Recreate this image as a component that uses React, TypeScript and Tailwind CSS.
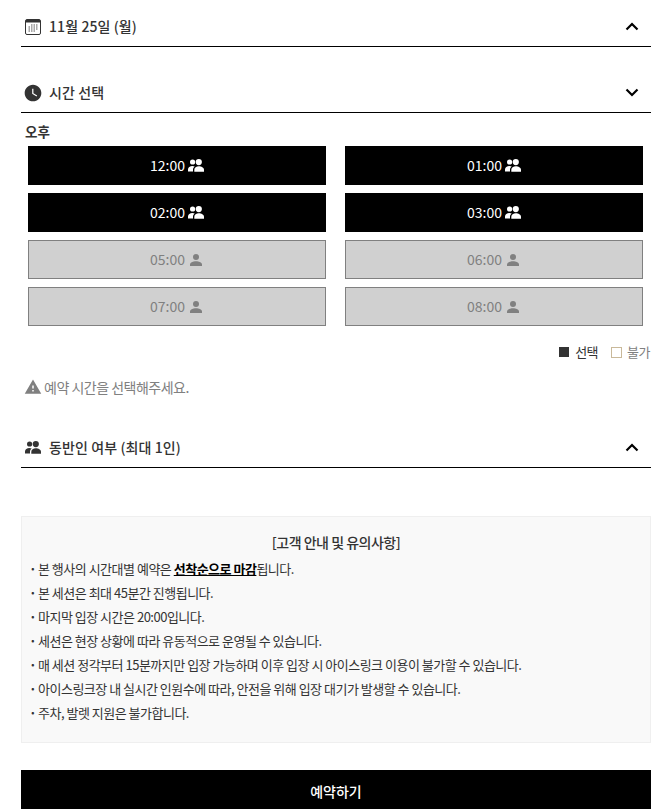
import React from 'react';
import { MdWarning, MdWatchLater } from 'react-icons/md';

const CalendarIcon = () => (
  <svg width="16" height="16" viewBox="0 0 16 16" fill="none" className="shrink-0">
    <rect x="0.5" y="0.5" width="15" height="15" rx="1.5" stroke="#333" />
    <rect x="1" y="1" width="14" height="2.5" fill="#333" />
    <path d="M6 6h1.5M8.500 6H10M11 6h1.500M3.500 8H5M6 8h1.500M8.500 8H10M11 8h1.500M3.500 10H5M6 10h1.500M8.500 10H10M11 10h1.500M3.500 12H5M6 12h1.500M8.500 12H10" stroke="#555" />
  </svg>
);

const PeopleIcon = ({ className }: { className?: string }) => (
  <svg width="16" height="13" viewBox="0 0 16 13" fill="currentColor" className={className}>
    <circle cx="4.6" cy="3" r="2.6" />
    <circle cx="10.8" cy="3.1" r="3.1" />
    <path d="M0 12.5V10.5C0 8.3 2 7 4.4 7c.9 0 1.7.2 2.3.5C5.600 8.300 5 9.400 5 10.700v1.800z" />
    <path d="M6.300 12.800V10.800C6.300 8.600 8.300 7.300 10.800 7.300s5.200 1.300 5.200 3.500v2z" />
  </svg>
);

const PersonIcon = () => (
  <svg width="12" height="12" viewBox="0 0 12 12" fill="currentColor">
    <circle cx="6" cy="3" r="3" />
    <path d="M0 12v-1.500C0 8.600 3 7.300 6 7.300s6 1.300 6 3.200V12z" />
  </svg>
);

const Chevron = ({ up }: { up?: boolean }) => (
  <svg width="14" height="9" viewBox="0 0 14 9" fill="none" className="mr-[12px]">
    <path d={up ? 'M1.500 7.500 7 2l5.500 5.500' : 'M1.500 1.500 7 7l5.500-5.500'} stroke="#000" strokeWidth="2.200" />
  </svg>
);

const Header = ({ icon, title, up }: { icon: React.ReactNode; title: string; up?: boolean }) => (
  <div className="h-[47px] pt-[7px] flex items-center justify-between border-b border-black pl-[4px]">
    <div className="flex items-center gap-[8px] text-[14px] tracking-[0.1px] font-medium text-[#333]">
      <span className="w-[16px] flex items-center justify-center">{icon}</span>
      {title}
    </div>
    <Chevron up={up} />
  </div>
);

const slots = [
  { time: '12:00', on: true },
  { time: '01:00', on: true },
  { time: '02:00', on: true },
  { time: '03:00', on: true },
  { time: '05:00', on: false },
  { time: '06:00', on: false },
  { time: '07:00', on: false },
  { time: '08:00', on: false },
];

const notes = [
  <>본 행사의 시간대별 예약은 <b className="font-bold underline text-black">선착순으로 마감</b>됩니다.</>,
  <>본 세션은 최대 45분간 진행됩니다.</>,
  <>마지막 입장 시간은 20:00입니다.</>,
  <>세션은 현장 상황에 따라 유동적으로 운영될 수 있습니다.</>,
  <>매 세션 정각부터 15분까지만 입장 가능하며 이후 입장 시 아이스링크 이용이 불가할 수 있습니다.</>,
  <>아이스링크장 내 실시간 인원수에 따라, 안전을 위해 입장 대기가 발생할 수 있습니다.</>,
  <>주차, 발렛 지원은 불가합니다.</>,
];

const App: React.FC = () => {
  return (
    <div className="h-[809px] overflow-hidden bg-white pl-[21px] pr-[8px] font-['Noto_Sans_CJK_KR','Noto_Sans',sans-serif] text-[#333]">
      <Header icon={<CalendarIcon />} title="11월 25일 (월)" up />

      <div className="mt-[19px]">
        <Header icon={<MdWatchLater size={20} color="#333" className="shrink-0" />} title="시간 선택" />
      </div>

      <div className="mt-[9px] pl-[4px] text-[13.500px] leading-[19px] font-bold">오후</div>

      {/* time slots */}
      <div className="mt-[5px] pl-[7px] pr-[8px] grid grid-cols-2 gap-x-[19px] gap-y-[8px]">
        {slots.map((s) => (
          <div
            key={s.time}
            className={
              s.on
                ? 'h-[39px] flex items-center justify-center gap-[3px] bg-black text-white text-[14px]'
                : 'h-[39px] flex items-center justify-center gap-[5px] pr-[2px] bg-[#d0d0d0] border border-[#808080] text-[#808080] text-[14px]'
            }
          >
            {s.time}
            {s.on ? <PeopleIcon className="shrink-0" /> : <PersonIcon />}
          </div>
        ))}
      </div>

      {/* legend */}
      <div className="mt-[16px] pr-[1px] flex justify-end items-center text-[13px] tracking-[-0.5px] leading-[20px]">
        <span className="w-[10px] h-[10px] bg-[#333] mr-[6px]" />
        <span className="text-[#333] mr-[13px]">선택</span>
        <span className="w-[11px] h-[11px] border border-[#c9b99a] mr-[5px]" />
        <span className="text-[#808080]">불가</span>
      </div>

      <div className="mt-[15px] pl-[3px] flex items-center gap-[2px] text-[14px] tracking-[-0.5px] leading-[20px] text-[#808080]">
        <MdWarning size={18} className="shrink-0" />
        예약 시간을 선택해주세요.
      </div>

      <div className="mt-[24px]">
        <Header icon={<PeopleIcon className="shrink-0 text-[#333]" />} title="동반인 여부 (최대 1인)" up />
      </div>

      {/* notice box */}
      <div className="mt-[48px] h-[227px] bg-[#f9f9f9] border border-[#efefef] px-[7px] pt-[15px]">
        <div className="text-center text-[14px] tracking-[-0.500px] leading-[20px] font-medium text-[#333]">[고객 안내 및 유의사항]</div>
        <ul className="mt-[5px]">
          {notes.map((n, i) => (
            <li key={i} className="h-[24px] flex items-center text-[13px] tracking-[-0.5px] text-[#333]">
              <span className="w-[9px] font-bold">·</span>
              <span>{n}</span>
            </li>
          ))}
        </ul>
      </div>

      <div className="mt-[27px] h-[42px] bg-black text-white flex items-center justify-center text-[14px] font-medium">
        예약하기
      </div>
    </div>
  );
};

export default App;
